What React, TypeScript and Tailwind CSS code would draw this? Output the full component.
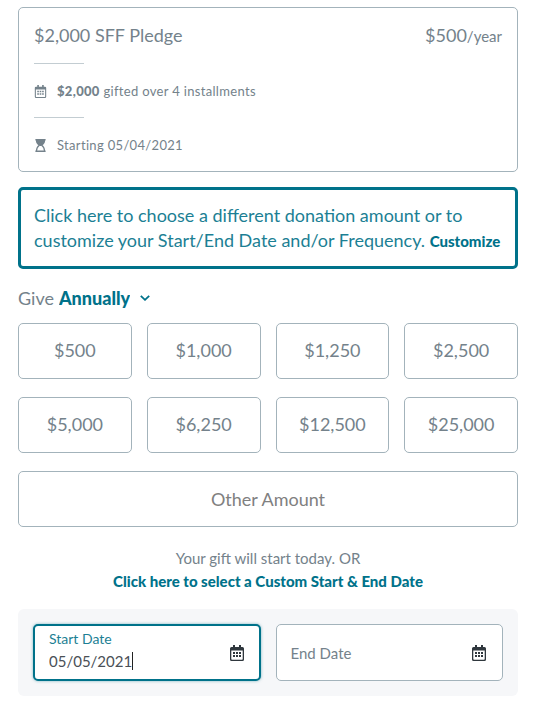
import { useState } from 'react';

const amounts = ['$500', '$1,000', '$1,250', '$2,500', '$5,000', '$6,250', '$12,500', '$25,000'];
const frequencies = ['Annually', 'Monthly', 'Quarterly', 'One Time'];

const boxClass = 'rounded-[5px] border border-[#a3b3bb] bg-white';
const linkClass = 'cursor-pointer font-black text-[#00728a]';

function CalendarIcon({ className }: { className: string }) {
  return (
    <svg viewBox="0 0 14 16" className={className} fill="none" aria-hidden="true">
      <path
        fill="currentColor"
        fillRule="evenodd"
        d="M3 0h2v2h4V0h2v2h1.5A1.5 1.5 0 0 1 14 3.500v11a1.500 1.500 0 0 1-1.500 1.500h-11A1.500 1.500 0 0 1 0 14.500v-11A1.500 1.500 0 0 1 1.500 2H3zM1.300 5.500v8.500q0 .7.700.7h10q.700 0 .700-.700V5.500z"
      />
      <path
        fill="currentColor"
        d="M3 7h2v2H3zM6 7h2v2H6zM9 7h2v2H9zM3 10h2v2H3zM6 10h2v2H6zM9 10h2v2H9z"
      />
    </svg>
  );
}

function HourglassIcon({ className }: { className: string }) {
  return (
    <svg viewBox="0 0 12 14" className={className} aria-hidden="true">
      <path fill="currentColor" d="M.5 0h11v1.500H11C11 4 9.500 6 7.500 7h-3C2.500 6 1 4 1 1.500H.5z" />
      <path
        fill="none"
        stroke="currentColor"
        strokeWidth="1.300"
        d="M5 6.500C3 8 1.700 9.500 1.700 13M7 6.500C9 8 10.300 9.500 10.300 13"
      />
      <path fill="currentColor" d="M.5 12.500h11V14H.5zM5 6h2v1.500H5z" />
    </svg>
  );
}

function PledgeCard() {
  return (
    <section className={`${boxClass} px-[15px] pt-[13px] pb-4`}>
      <div className="flex items-baseline justify-between text-lg leading-7">
        <h1>$2,000 SFF Pledge</h1>
        <p>
          $500<span className="text-[15px] leading-5">/year</span>
        </p>
      </div>
      <hr className="mt-3.5 w-[50px] border-[#c3cdd2]" />
      <p className="mt-[17px] flex items-center text-[13px] leading-5 tracking-wide">
        <CalendarIcon className="mr-2.5 h-[13px] w-[13px]" />
        <span>
          <b className="font-black">$2,000</b> gifted over 4 installments
        </span>
      </p>
      <hr className="mt-4 w-[50px] border-[#c3cdd2]" />
      <p className="mt-[17px] flex items-center text-[13px] leading-5 tracking-wide">
        <HourglassIcon className="mr-2.5 h-[13px] w-[13px]" />
        Starting 05/04/2021
      </p>
    </section>
  );
}

function DateFields() {
  const [start, setStart] = useState('05/05/2021');
  const [end, setEnd] = useState('');

  return (
    <div className="mt-4 grid grid-cols-2 gap-[15px] rounded-md bg-[#f6f7f9] p-[15px]">
      <div className="flex h-[57px] items-center justify-between rounded-[5px] border-2 border-[#00728a] bg-white pr-[15px] pl-3.5 shadow-[0_0_3px_#00728a80]">
        <div className="pb-1">
          <label htmlFor="start-date" className="block text-sm leading-5 text-[#1c7f94]">
            Start Date
          </label>
          <div className="flex items-center">
            <input
              id="start-date"
              value={start}
              onChange={(e) => setStart(e.target.value)}
              className="field-sizing-content max-w-36 text-[15px] leading-6 text-[#4a5056] caret-transparent outline-none"
            />
            <span className="h-[18px] w-px bg-[#222]" />
          </div>
        </div>
        <button type="button" aria-label="Pick start date" className="text-[#2f373d]">
          <CalendarIcon className="h-4 w-3.5" />
        </button>
      </div>
      <div className={`${boxClass} flex h-[57px] items-center justify-between pr-4 pl-3.5`}>
        <input
          aria-label="End Date"
          placeholder="End Date"
          value={end}
          onChange={(e) => setEnd(e.target.value)}
          className="w-full min-w-0 text-[15px] leading-6 outline-none placeholder:text-[#74828b]"
        />
        <button type="button" aria-label="Pick end date" className="text-[#2f373d]">
          <CalendarIcon className="h-4 w-3.5" />
        </button>
      </div>
    </div>
  );
}

export default function App() {
  return (
    <main className="bg-white pt-[7px] pr-[17px] pb-3 pl-[18px] font-['Lato','Liberation_Sans',sans-serif] text-[#74828b]">
      <PledgeCard />

      <div className="mt-[15px] rounded-[5px] border-3 border-[#00728a] p-[13px] text-lg leading-[25px] text-[#1c7f94]">
        Click here to choose a different donation amount or to customize your Start/End Date and/or
        Frequency.{' '}
        <button type="button" className={`${linkClass} text-[15px] leading-5`}>
          Customize
        </button>
      </div>

      <div className="mt-[15px] flex items-center text-lg leading-7">
        <label htmlFor="frequency">Give</label>
        <select
          id="frequency"
          className="field-sizing-content ml-[5px] cursor-pointer appearance-none font-black text-[#00728a] outline-none"
        >
          {frequencies.map((f) => (
            <option key={f}>{f}</option>
          ))}
        </select>
        <svg viewBox="0 0 10 6" className="ml-2.5 h-1.5 w-2.5" fill="none" aria-hidden="true">
          <path d="M.8.8 5 4.800 9.200.8" stroke="#00728a" strokeWidth="1.800" />
        </svg>
      </div>

      <div className="mt-[11px] grid grid-cols-4 gap-x-[15px] gap-y-[18px]">
        {amounts.map((amount) => (
          <button key={amount} type="button" className={`${boxClass} h-14 cursor-pointer pb-0.5 text-lg`}>
            {amount}
          </button>
        ))}
        <input
          aria-label="Other Amount"
          placeholder="Other Amount"
          className={`${boxClass} col-span-4 h-14 text-center text-lg outline-none placeholder:text-[#808080]`}
        />
      </div>

      <div className="mt-5 text-center text-[15px] leading-[23px]">
        <p>Your gift will start today. OR</p>
        <button type="button" className={linkClass}>
          Click here to select a Custom Start &amp; End Date
        </button>
      </div>

      <DateFields />
    </main>
  );
}
